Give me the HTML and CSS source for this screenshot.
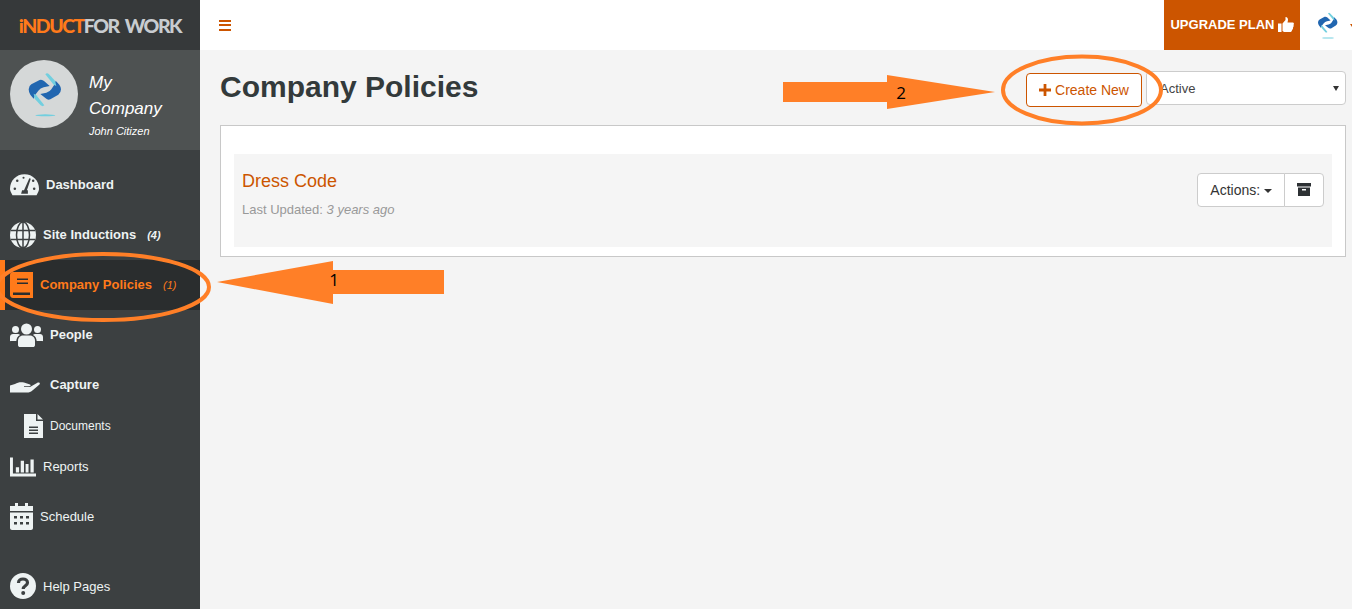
FILE: index.html
```html
<!DOCTYPE html>
<html lang="en">
<head>
  <meta charset="UTF-8" />
  <title>Company Policies</title>
  <link rel="stylesheet" href="styles.css">
</head>
<body>
  <svg class="defs" width="0" height="0">
    <symbol id="brand" viewBox="20 20 105 135">
      <path fill="#2166b0" d="M25 72Q25 62 33 57L58 44Q66 42 72 48L88 62 70 66Q60 68 54 76L45 88 40 100 30 88Q25 80 25 72Z"/>
      <path fill="#2166b0" d="M122 72Q122 82 114 88L90 102Q82 105 76 99L60 86 78 82Q88 80 93 72L101 60 106 46 117 58Q122 65 122 72Z"/>
      <path fill="#72cfdf" d="M75 27Q80 21 86 27L104 46 108 62 100 58Z"/>
      <path fill="#72cfdf" d="M72 120Q67 125 61 120L43 100 40 85 48 90Z"/>
      <ellipse fill="#72cfdf" cx="75" cy="150" rx="30" ry="3"/>
    </symbol>
  </svg>

  <div class="app">
    <aside class="sidebar">
      <div class="logo"><span class="logo-a">iNDUCT</span><span class="logo-b">FOR WORK</span></div>

      <div class="profile">
        <div class="avatar"><svg class="avatar-img"><use href="#brand"/></svg></div>
        <div class="profile-text">
          <div class="company">My<br>Company</div>
          <div class="user">John Citizen</div>
        </div>
      </div>

      <nav class="nav">
        <a class="nav-item bold">
          <svg class="icon" width="29" height="22" viewBox="0 0 30 22"><path fill="#eef3f3" d="M2.500 21.500C1 19 0 17 0 15 0 6.500 6.500 0 15 0S30 6.500 30 15C30 17 29 19 27.500 21.500Z"/><g fill="#3c4041"><circle cx="7.500" cy="6.500" r="1.300"/><circle cx="14" cy="3.500" r="1.100"/><circle cx="24" cy="6.500" r="1.300"/><circle cx="5" cy="15" r="1.300"/><circle cx="25" cy="15" r="1.300"/><path d="M20 4 21.500 4.500 17.500 16.500H18.500V20H11.500L12.500 16.500H14.500Z"/></g></svg>
          <span>Dashboard</span>
        </a>
        <a class="nav-item bold">
          <svg class="icon" width="26" height="26" viewBox="0 0 26 26"><circle cx="13" cy="13" r="13" fill="#eef3f3"/><g fill="none" stroke="#3c4041" stroke-width="1.500"><ellipse cx="13" cy="13" rx="6.500" ry="13"/><path d="M13 0V26M1 8.500H25M1 17.500H25"/></g></svg>
          <span>Site Inductions</span><em class="count">(4)</em>
        </a>
        <a class="nav-item bold active">
          <svg class="icon" width="23" height="26" viewBox="0 0 23 26"><path fill="#ff7a1a" fill-rule="evenodd" d="M3 0H23V26H3C1 26 0 24.500 0 23V3C0 1 1 0 3 0ZM7 6.500V8H18V6.500ZM7 10.500V12H18V10.500ZM3 20.500V23H20V20.500Z"/></svg>
          <span>Company Policies</span><em class="count">(1)</em>
        </a>
        <a class="nav-item bold">
          <svg class="icon" width="33" height="24" viewBox="0 0 33 24"><g fill="#eef3f3"><circle cx="16.500" cy="6" r="5.500"/><circle cx="5.500" cy="6.500" r="3.500"/><circle cx="27.500" cy="6.500" r="3.500"/><path d="M8 22V18C8 14 11 12.500 13 12.500H20C22 12.500 25 14 25 18V22C25 23.500 24 24 23 24H10C9 24 8 23.500 8 22Z"/><path d="M0 18V14C0 12 1.500 11 3 11H8C8.800 11 9.500 11.500 10 12 7.800 13 6.500 15 6.300 18H1C.5 18 0 18.500 0 18ZM33 18V14C33 12 31.500 11 30 11H25C24.200 11 23.500 11.500 23 12 25.200 13 26.500 15 26.700 18H32C32.500 18 33 18.500 33 18Z"/></g></svg>
          <span>People</span>
        </a>
        <a class="nav-item bold wide">
          <svg class="icon hand" width="30" height="11" viewBox="0 0 30 11"><path fill="#eef3f3" d="M0 3.500 5 2C8 0 11 0 14 .5L20 2.500C21 3 21 4 19.500 4.200H14V5H20L27 1C29 0 30.500 1 29.500 2.500L23 8C21 10 19 10.500 17 10.500H0Z"/></svg>
          <span>Capture</span>
        </a>
        <a class="nav-sub">
          <svg class="icon" width="19" height="24" viewBox="0 0 19 24"><path fill="#eef3f3" fill-rule="evenodd" d="M0 0H12V7H19V24H0ZM13.500 0 19 5.500H13.500ZM5 12.500V14H14V12.500ZM5 15.500V17H14V15.500ZM5 18.500V20H14V18.500Z"/></svg>
          <span>Documents</span>
        </a>
        <a class="nav-item">
          <svg class="icon bars" width="26" height="20" viewBox="15 22 80 58"><path fill="#eef3f3" d="M15 22H24V71H95V80H15ZM33 52H43V68H33ZM48 32H58V68H48ZM63 42H72V68H63ZM78 28H88V68H78Z"/></svg>
          <span>Reports</span>
        </a>
        <a class="nav-item">
          <svg class="icon" width="23" height="27" viewBox="0 0 23 27"><path fill="#eef3f3" fill-rule="evenodd" d="M5 0H8V3H15V0H18V3H23V8H0V3H5ZM0 9.500H23V25C23 26 22 27 21 27H2C1 27 0 26 0 25ZM4 13V15.500H7V13ZM10 13V15.500H13V13ZM16 13V15.500H19V13ZM4 19V21.500H7V19ZM10 19V21.500H13V19ZM16 19V21.500H19V19Z"/></svg>
          <span>Schedule</span>
        </a>
        <a class="nav-item help">
          <svg class="icon" width="26" height="26" viewBox="0 0 26 26"><circle cx="13" cy="13" r="13" fill="#eef3f3"/><path fill="none" stroke="#3c4041" stroke-width="3.200" d="M8.500 10C8.500 7.500 10.500 6 13 6 15.500 6 17.500 7.500 17.500 9.800 17.500 12.800 13.200 12.800 13.200 16"/><circle cx="13.200" cy="20" r="2" fill="#3c4041"/></svg>
          <span>Help Pages</span>
        </a>
      </nav>
    </aside>

    <div class="main">
      <header class="topbar">
        <button class="menu-btn" aria-label="Menu"><span></span><span></span><span></span></button>
        <a class="upgrade">UPGRADE PLAN
          <svg width="16" height="15" viewBox="0 0 16 15"><path fill="#fff" d="M0 6.500H3.500V15H0ZM4.500 6.500 7.500 3V0C9.500 0 10 1.500 10 3L9.500 5.500H14.500C16 5.500 16.300 7 15.500 8 16 9 15.500 10 15 10.500 15.200 11.500 14.800 12.500 14 13 14 14.500 13 15 12 15H7C6 15 5 14.500 4.500 14Z"/></svg>
        </a>
        <svg class="top-brand"><use href="#brand"/></svg>
        <span class="top-caret"></span>
      </header>

      <main class="content">
        <div class="page-head">
          <h1>Company Policies</h1>
          <a class="btn-create">
            <svg width="12" height="12" viewBox="0 0 13 13"><path fill="#cc5500" d="M5 0H8V5H13V8H8V13H5V8H0V5H5Z"/></svg>
            Create New
          </a>
          <div class="status-wrap">
            <select class="status"><option>Active</option></select>
          </div>
        </div>

        <section class="panel">
          <div class="policy">
            <div class="policy-info">
              <h3>Dress Code</h3>
              <p>Last Updated: <em>3 years ago</em></p>
            </div>
            <div class="btn-group">
              <button class="btn">Actions: <span class="caret"></span></button>
              <button class="btn btn-icon" aria-label="Archive">
                <svg width="14" height="13" viewBox="0 0 14 13"><path fill="#2d3134" fill-rule="evenodd" d="M0 0H14V3.500H0ZM1 4.500H13V13H1ZM5 6V7.500H9V6Z"/></svg>
              </button>
            </div>
          </div>
        </section>
      </main>
    </div>
  </div>

  <!-- hand drawn annotations on top of the screenshot -->
  <svg class="notes" width="1352" height="609" viewBox="0 0 1352 609">
    <g fill="none" stroke="#ff7f27" stroke-width="4">
      <ellipse cx="103" cy="287" rx="106" ry="33"/>
      <ellipse cx="1082" cy="90" rx="79" ry="33.500"/>
    </g>
    <g fill="#ff7f27">
      <path d="M217 282 333 261V270H444V294H333V304Z"/>
      <path d="M783 82H887V75L995 92 887 109V102H783Z"/>
    </g>
    <text class="note-num" x="334" y="286">1</text>
    <text class="note-num" x="901" y="99">2</text>
  </svg>
</body>
</html>
```

FILE: styles.css
```css
* {
  box-sizing: border-box;
}

html, body {
  height: 100%;
  margin: 0;
  overflow: hidden;
  font-family: "Liberation Sans", Arial, sans-serif;
  background: #f4f4f4;
  color: #333a3b;
}

.defs {
  position: absolute;
}

.app {
  display: flex;
  height: 609px;
}

/* sidebar */
.sidebar {
  width: 200px;
  flex: none;
  background: #3c4041;
  color: #eef3f3;
}

.logo {
  height: 50px;
  background: #36393a;
  display: flex;
  align-items: center;
  justify-content: center;
  font-family: Lato, sans-serif;
  font-weight: 900;
  font-size: 19.5px;
  letter-spacing: -1.5px;
  word-spacing: 3px;
}

.logo-a {
  color: #ff7a1a;
}

.logo-b {
  color: #c8ccd0;
}

.profile {
  height: 100px;
  background: #4e5252;
  display: flex;
  align-items: flex-start;
  padding: 10px 0 0 10px;
  gap: 11px;
}

.avatar {
  width: 68px;
  height: 68px;
  border-radius: 50%;
  background: #d5d8d8;
  display: flex;
  align-items: center;
  justify-content: center;
}

.avatar-img {
  width: 35px;
  height: 45px;
}

.profile-text {
  color: #fff;
  font-style: italic;
  padding-top: 10px;
}

.company {
  font-size: 17px;
  line-height: 26px;
}

.user {
  font-size: 11px;
  line-height: 18px;
}

.nav {
  padding-top: 10px;
}

.nav-item {
  height: 50px;
  display: flex;
  align-items: center;
  gap: 7px;
  padding-left: 10px;
  font-size: 13px;
}

.nav-item.bold {
  font-weight: bold;
}

.nav-item.bold span {
  margin-bottom: 2px;
}

.nav-item.wide {
  gap: 10px;
}

.nav-item.help {
  margin-top: 20px;
}

.nav-item.active {
  background: #2a2d2e;
  color: #ff7a1a;
  border-left: 5px solid #ff7a1a;
  padding-left: 5px;
}

.nav-sub {
  height: 31px;
  display: flex;
  align-items: center;
  gap: 7px;
  padding-left: 24px;
  font-size: 12px;
}

.icon {
  flex: none;
}

.hand {
  margin-top: 4px;
}

.bars {
  margin-top: 2px;
}

.count {
  font-size: 11px;
  margin-left: 4px;
  font-weight: bold;
}

.active .count {
  font-weight: normal;
}

/* top bar */
.main {
  flex: 1;
  min-width: 0;
}

.topbar {
  height: 50px;
  background: #fff;
  display: flex;
  align-items: center;
  padding-left: 19px;
}

.menu-btn {
  width: 12px;
  height: 11px;
  padding: 0;
  border: none;
  background: none;
  display: flex;
  flex-direction: column;
  justify-content: space-between;
  margin-right: auto;
}

.menu-btn span {
  display: block;
  height: 2px;
  background: #cc5500;
}

.upgrade {
  height: 50px;
  width: 136px;
  padding-bottom: 2px;
  background: #cc5500;
  color: #fff;
  font-size: 13px;
  font-weight: bold;
  display: flex;
  align-items: center;
  justify-content: center;
  gap: 3px;
  white-space: nowrap;
}

.top-brand {
  width: 21px;
  height: 29px;
  margin: 0 0 0 17px;
}

.top-caret {
  width: 0;
  height: 0;
  margin-left: 12px;
  margin-right: -2px;
  border-top: 3px solid #cc5500;
  border-left: 2px solid transparent;
  border-right: 2px solid transparent;
}

/* page */
.content {
  padding: 21px 6px 0 20px;
}

.page-head {
  height: 34px;
  display: flex;
  align-items: flex-start;
  margin-bottom: 20px;
}

.page-head h1 {
  margin: 0 auto 0 0;
  font-size: 30px;
  line-height: 32px;
  font-weight: bold;
}

.btn-create {
  width: 116px;
  height: 34px;
  margin-top: 2px;
  border: 1px solid #cc5500;
  border-radius: 4px;
  background: #fff;
  color: #cc5500;
  font-size: 14px;
  display: flex;
  align-items: center;
  justify-content: center;
  gap: 4px;
}

.status-wrap {
  position: relative;
  margin-left: 4px;
}

.status-wrap::after {
  content: "";
  position: absolute;
  right: 7px;
  top: 15px;
  border-top: 5px solid #333;
  border-left: 3.500px solid transparent;
  border-right: 3.500px solid transparent;
}

.status {
  display: block;
  width: 200px;
  height: 34px;
  padding-left: 13px;
  border: 1px solid #ccc;
  border-radius: 4px;
  background: #fff;
  appearance: none;
  font-family: "Liberation Sans", Arial, sans-serif;
  font-size: 13px;
  color: #444;
}

.panel {
  height: 132px;
  background: #fff;
  border: 1px solid #c8c8c8;
  padding: 28px 13px 9px;
}

.policy {
  height: 93px;
  background: #f5f5f5;
  padding: 19px 8px 0;
  display: flex;
  justify-content: space-between;
  align-items: flex-start;
}

.policy-info h3 {
  margin: 0;
  font-size: 18px;
  line-height: 16px;
  font-weight: normal;
  color: #cc5500;
}

.policy-info p {
  margin: 13px 0 0;
  font-size: 13px;
  color: #999;
}

.btn-group {
  display: flex;
}

.btn {
  height: 34px;
  padding: 0 12px;
  background: #fff;
  border: 1px solid #ccc;
  border-radius: 4px 0 0 4px;
  font-family: "Liberation Sans", Arial, sans-serif;
  font-size: 14px;
  color: #333;
}

.btn-icon {
  width: 40px;
  margin-left: -1px;
  padding: 2px 0 0;
  border-radius: 0 4px 4px 0;
}

.caret {
  display: inline-block;
  vertical-align: middle;
  border-top: 4px solid #333;
  border-left: 4px solid transparent;
  border-right: 4px solid transparent;
}

.notes {
  position: absolute;
  left: 0;
  top: 0;
  pointer-events: none;
}

.note-num {
  font-family: "Open Sans", sans-serif;
  font-size: 17px;
  fill: #000;
  text-anchor: middle;
}
```
